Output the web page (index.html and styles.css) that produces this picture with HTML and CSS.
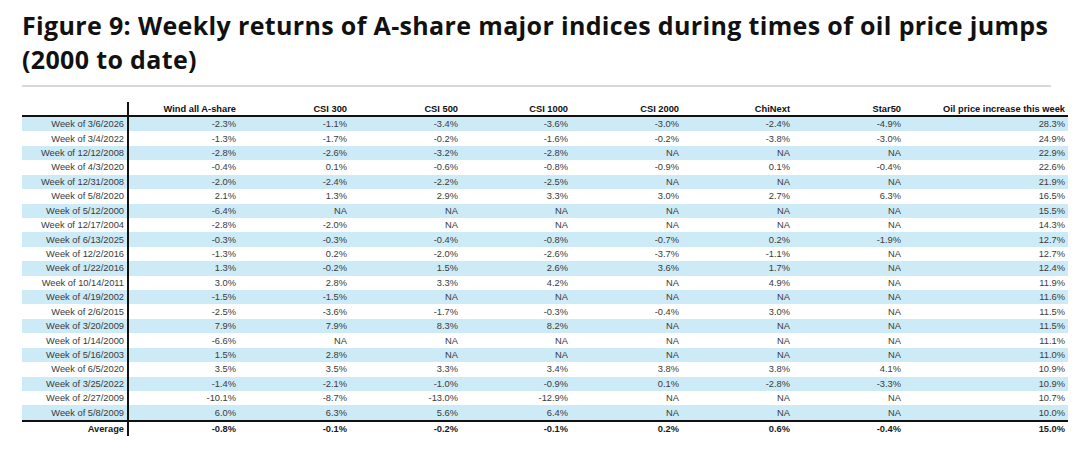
FILE: index.html
```html
<!DOCTYPE html>
<html lang="en">
<head>
<meta charset="utf-8">
<title>Figure 9</title>
<link rel="stylesheet" href="styles.css">
</head>
<body>
<div class="page">
  <h1 class="title">Figure 9: Weekly returns of A-share major indices during times of oil price jumps<br>(2000 to date)</h1>
  <div class="rule"></div>
  <table class="data">
    <colgroup>
      <col class="c-label"><col class="c-std"><col class="c-std"><col class="c-std"><col class="c-narrow"><col class="c-std"><col class="c-std"><col class="c-std"><col class="c-wide">
    </colgroup>
    <thead>
      <tr><th></th><th>Wind all A-share</th><th>CSI 300</th><th>CSI 500</th><th>CSI 1000</th><th>CSI 2000</th><th>ChiNext</th><th>Star50</th><th>Oil price increase this week</th></tr>
    </thead>
    <tbody>
      <tr><td>Week of 3/6/2026</td><td>-2.3%</td><td>-1.1%</td><td>-3.4%</td><td>-3.6%</td><td>-3.0%</td><td>-2.4%</td><td>-4.9%</td><td>28.3%</td></tr>
      <tr><td>Week of 3/4/2022</td><td>-1.3%</td><td>-1.7%</td><td>-0.2%</td><td>-1.6%</td><td>-0.2%</td><td>-3.8%</td><td>-3.0%</td><td>24.9%</td></tr>
      <tr><td>Week of 12/12/2008</td><td>-2.8%</td><td>-2.6%</td><td>-3.2%</td><td>-2.8%</td><td>NA</td><td>NA</td><td>NA</td><td>22.9%</td></tr>
      <tr><td>Week of 4/3/2020</td><td>-0.4%</td><td>0.1%</td><td>-0.6%</td><td>-0.8%</td><td>-0.9%</td><td>0.1%</td><td>-0.4%</td><td>22.6%</td></tr>
      <tr><td>Week of 12/31/2008</td><td>-2.0%</td><td>-2.4%</td><td>-2.2%</td><td>-2.5%</td><td>NA</td><td>NA</td><td>NA</td><td>21.9%</td></tr>
      <tr><td>Week of 5/8/2020</td><td>2.1%</td><td>1.3%</td><td>2.9%</td><td>3.3%</td><td>3.0%</td><td>2.7%</td><td>6.3%</td><td>16.5%</td></tr>
      <tr><td>Week of 5/12/2000</td><td>-6.4%</td><td>NA</td><td>NA</td><td>NA</td><td>NA</td><td>NA</td><td>NA</td><td>15.5%</td></tr>
      <tr><td>Week of 12/17/2004</td><td>-2.8%</td><td>-2.0%</td><td>NA</td><td>NA</td><td>NA</td><td>NA</td><td>NA</td><td>14.3%</td></tr>
      <tr><td>Week of 6/13/2025</td><td>-0.3%</td><td>-0.3%</td><td>-0.4%</td><td>-0.8%</td><td>-0.7%</td><td>0.2%</td><td>-1.9%</td><td>12.7%</td></tr>
      <tr><td>Week of 12/2/2016</td><td>-1.3%</td><td>0.2%</td><td>-2.0%</td><td>-2.6%</td><td>-3.7%</td><td>-1.1%</td><td>NA</td><td>12.7%</td></tr>
      <tr><td>Week of 1/22/2016</td><td>1.3%</td><td>-0.2%</td><td>1.5%</td><td>2.6%</td><td>3.6%</td><td>1.7%</td><td>NA</td><td>12.4%</td></tr>
      <tr><td>Week of 10/14/2011</td><td>3.0%</td><td>2.8%</td><td>3.3%</td><td>4.2%</td><td>NA</td><td>4.9%</td><td>NA</td><td>11.9%</td></tr>
      <tr><td>Week of 4/19/2002</td><td>-1.5%</td><td>-1.5%</td><td>NA</td><td>NA</td><td>NA</td><td>NA</td><td>NA</td><td>11.6%</td></tr>
      <tr><td>Week of 2/6/2015</td><td>-2.5%</td><td>-3.6%</td><td>-1.7%</td><td>-0.3%</td><td>-0.4%</td><td>3.0%</td><td>NA</td><td>11.5%</td></tr>
      <tr><td>Week of 3/20/2009</td><td>7.9%</td><td>7.9%</td><td>8.3%</td><td>8.2%</td><td>NA</td><td>NA</td><td>NA</td><td>11.5%</td></tr>
      <tr><td>Week of 1/14/2000</td><td>-6.6%</td><td>NA</td><td>NA</td><td>NA</td><td>NA</td><td>NA</td><td>NA</td><td>11.1%</td></tr>
      <tr><td>Week of 5/16/2003</td><td>1.5%</td><td>2.8%</td><td>NA</td><td>NA</td><td>NA</td><td>NA</td><td>NA</td><td>11.0%</td></tr>
      <tr><td>Week of 6/5/2020</td><td>3.5%</td><td>3.5%</td><td>3.3%</td><td>3.4%</td><td>3.8%</td><td>3.8%</td><td>4.1%</td><td>10.9%</td></tr>
      <tr><td>Week of 3/25/2022</td><td>-1.4%</td><td>-2.1%</td><td>-1.0%</td><td>-0.9%</td><td>0.1%</td><td>-2.8%</td><td>-3.3%</td><td>10.9%</td></tr>
      <tr><td>Week of 2/27/2009</td><td>-10.1%</td><td>-8.7%</td><td>-13.0%</td><td>-12.9%</td><td>NA</td><td>NA</td><td>NA</td><td>10.7%</td></tr>
      <tr><td>Week of 5/8/2009</td><td>6.0%</td><td>6.3%</td><td>5.6%</td><td>6.4%</td><td>NA</td><td>NA</td><td>NA</td><td>10.0%</td></tr>
    </tbody>
    <tfoot>
      <tr><td>Average</td><td>-0.8%</td><td>-0.1%</td><td>-0.2%</td><td>-0.1%</td><td>0.2%</td><td>0.6%</td><td>-0.4%</td><td>15.0%</td></tr>
    </tfoot>
  </table>
</div>
</body>
</html>
```
FILE: styles.css
```css
html, body {
  margin: 0;
  padding: 0;
  background: #ffffff;
}

.page {
  padding: 8px 12px 0 22px;
}

.title {
  margin: 0;
  font-family: "Open Sans", "Liberation Sans", sans-serif;
  font-weight: 700;
  font-size: 25px;
  line-height: 34px;
  color: #111111;
  letter-spacing: 0.35px;
}

.rule {
  width: 1029px;
  height: 2px;
  background: #d9d9d9;
  margin-top: 9px;
}

.data {
  margin-top: 15px;
  width: 1046px;
  table-layout: fixed;
  border-collapse: collapse;
  font-family: "Liberation Sans", Arial, sans-serif;
  font-size: 9.3px;
  color: #3a3a3a;
}

.c-label { width: 106px; }
.c-std { width: 111px; }
.c-narrow { width: 110px; }
.c-wide { width: 164px; }

.data th,
.data td {
  padding: 0 3px 0 0;
  text-align: right;
  white-space: nowrap;
  vertical-align: middle;
}

.data th {
  height: 13px;
  font-weight: 700;
  color: #111111;
  border-bottom: 2px solid #111111;
}

.data th:first-child,
.data td:first-child {
  border-right: 2px solid #111111;
}

.data tbody td {
  height: 14.43px;
}

.data tbody tr:nth-child(odd) td {
  background: #cdeaf7;
}

.data tfoot td {
  height: 14px;
  font-weight: 700;
  color: #1a1a1a;
  border-top: 2px solid #111111;
}
```
